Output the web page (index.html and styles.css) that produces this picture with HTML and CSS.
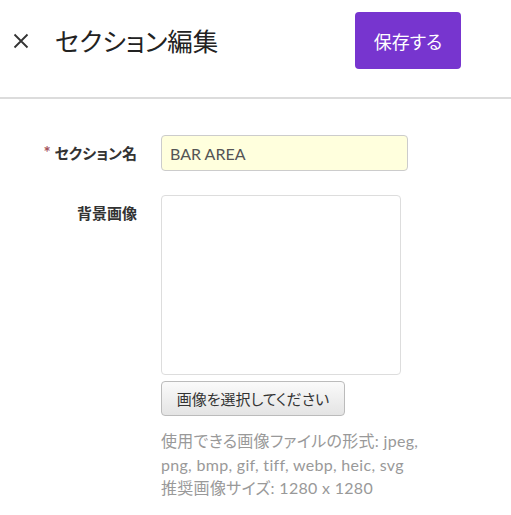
FILE: index.html
```html
<!DOCTYPE html>
<html lang="ja">
<head>
<meta charset="utf-8">
<link rel="stylesheet" href="styles.css">
</head>
<body>
<header class="topbar">
  <button class="close" aria-label="閉じる">
    <svg width="16" height="16" viewBox="0 0 16 16"><path d="M1.5 1.5 L14.5 14.5 M14.5 1.5 L1.5 14.5" stroke="#333" stroke-width="1.8" fill="none"/></svg>
  </button>
  <h1 class="title">セクション編集</h1>
  <button class="save">保存する</button>
</header>
<main class="form">
  <label class="label"><span class="req">*</span> セクション名</label>
  <div class="field"><input class="text-input" type="text" value="BAR AREA"></div>
  <label class="label">背景画像</label>
  <div class="field">
    <div class="image-box"></div>
    <button class="choose">画像を選択してください</button>
    <p class="help">使用できる画像ファイルの形式: jpeg,<br>png, bmp, gif, tiff, webp, heic, svg<br>推奨画像サイズ: 1280 x 1280</p>
  </div>
</main>
</body>
</html>
```
FILE: styles.css
```css
html, body {
  margin: 0;
  padding: 0;
  background: #fff;
}
body {
  font-family: Lato, "Noto Sans CJK JP", sans-serif;
  font-feature-settings: "palt";
  color: #333;
}
.topbar {
  display: flex;
  align-items: center;
  padding: 12px 0 28px 0;
  border-bottom: 2px solid #dcdcdc;
}
.close {
  border: 0;
  background: none;
  padding: 0;
  margin: 0 0 0 13px;
  width: 16px;
  height: 16px;
  display: flex;
}
.title {
  margin: 0 0 0 26px;
  font-size: 25.5px;
  font-weight: normal;
  color: #222;
  line-height: 40px;
}
.save {
  margin: 0 50px 0 auto;
  width: 106px;
  height: 57px;
  border: 0;
  border-radius: 4px;
  background: #7735cf;
  color: #fff;
  font-family: Lato, "Noto Sans CJK JP", sans-serif;
  font-feature-settings: "palt";
  font-size: 18px;
  padding: 0;
}
.form {
  display: grid;
  grid-template-columns: 137px 1fr;
  column-gap: 24px;
  row-gap: 24px;
  margin-top: 36px;
}
.label {
  text-align: right;
  font-size: 15px;
  font-weight: bold;
  line-height: 36px;
  color: #333;
}
.req {
  color: #a4515b;
  font-size: 17px;
}
.field {
  display: flex;
  flex-direction: column;
  align-items: flex-start;
}
.text-input {
  box-sizing: border-box;
  width: 247px;
  height: 36px;
  margin: 0;
  padding: 0 8px;
  border: 1px solid #ccc;
  border-radius: 4px;
  background: #ffffdd;
  font-family: Lato, "Noto Sans CJK JP", sans-serif;
  font-size: 16px;
  color: #555;
  outline: none;
}
.image-box {
  box-sizing: border-box;
  width: 240px;
  height: 180px;
  border: 1px solid #ddd;
  border-radius: 4px;
}
.choose {
  box-sizing: border-box;
  margin-top: 6px;
  width: 184px;
  height: 35px;
  border: 1px solid #bbb;
  border-radius: 4px;
  background: linear-gradient(#fafafa, #e4e4e4);
  font-family: Lato, "Noto Sans CJK JP", sans-serif;
  font-feature-settings: "palt";
  font-size: 15px;
  color: #333;
  padding: 0;
}
.help {
  margin: 13px 0 0 0;
  font-size: 16px;
  line-height: 23.5px;
  letter-spacing: 0.3px;
  color: #999;
}
```
